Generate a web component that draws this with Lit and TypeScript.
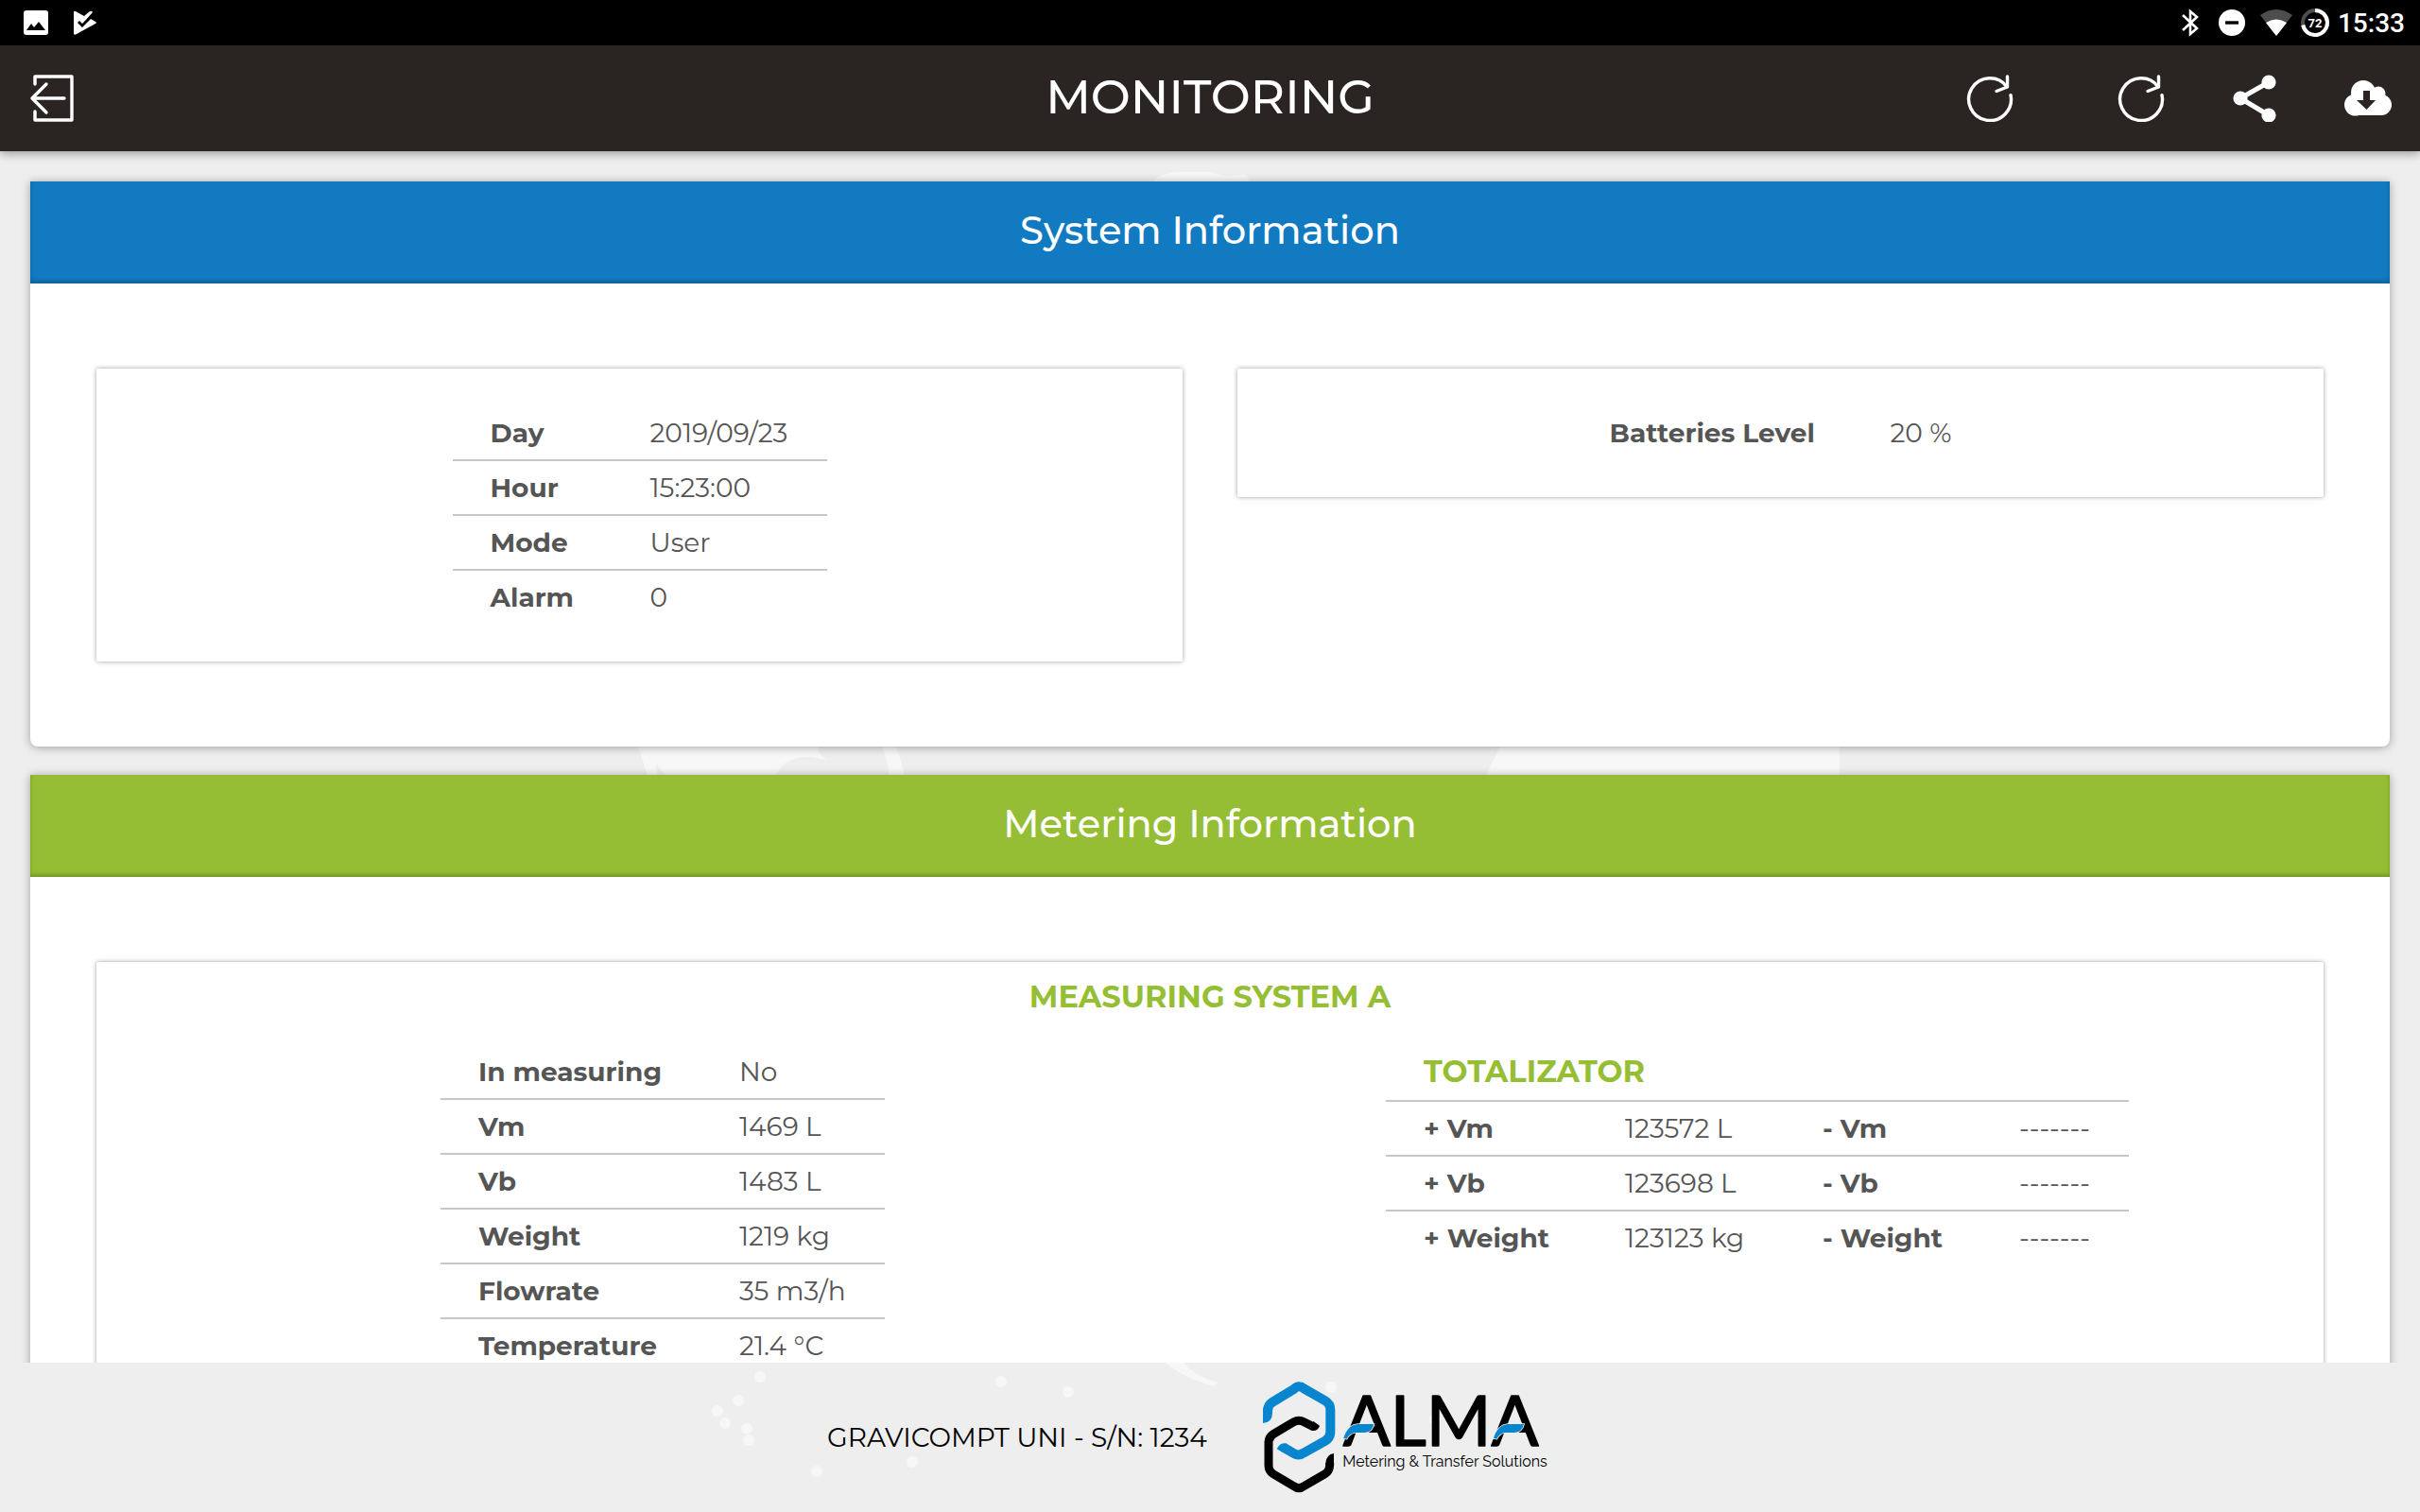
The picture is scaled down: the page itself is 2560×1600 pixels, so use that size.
import { LitElement, html, css, svg } from "lit";
import { customElement, property } from "lit/decorators.js";

type Row = [string, string];

const DAY_ROWS: Row[] = [
  ["Day", "2019/09/23"],
  ["Hour", "15:23:00"],
  ["Mode", "User"],
  ["Alarm", "0"],
];

const BATTERY_ROWS: Row[] = [["Batteries Level", "20 %"]];

const MEASURE_ROWS: Row[] = [
  ["In measuring", "No"],
  ["Vm", "1469 L"],
  ["Vb", "1483 L"],
  ["Weight", "1219 kg"],
  ["Flowrate", "35 m3/h"],
  ["Temperature", "21.4 °C"],
];

const TOTAL_ROWS = [
  ["+ Vm", "123572 L", "- Vm", "-------"],
  ["+ Vb", "123698 L", "- Vb", "-------"],
  ["+ Weight", "123123 kg", "- Weight", "-------"],
];

const DOTS = [
  [804, 1457], [781, 1482], [759, 1493], [767, 1506], [790, 1512], [792, 1524],
  [965, 1547], [864, 1557], [1059, 1462], [1130, 1473], [1408, 1468], [1518, 1502],
];

const tableStyles = css`
  table {
    border-collapse: separate;
    border-spacing: 0;
    table-layout: fixed;
    color: #555;
    font-size: 28px;
    line-height: 56px;
  }
  th,
  td {
    box-sizing: border-box;
    padding: 0 0 0 40px;
    text-align: left;
    white-space: nowrap;
    font-weight: 400;
  }
  th {
    font-weight: 700;
  }
  tr:not(.last) > * {
    border-bottom: 2px solid #c8c8c8;
  }
`;

@customElement("status-bar")
class StatusBar extends LitElement {
  static styles = css`
    :host {
      display: flex;
      align-items: center;
      justify-content: space-between;
      height: 48px;
      padding: 0 16px 0 25px;
      background: #000;
      color: #fff;
      font: 500 28px/50px Roboto, sans-serif;
    }
    .group {
      display: flex;
      align-items: center;
    }
    .left {
      gap: 26px;
    }
    .right {
      gap: 9px;
    }
    .wide {
      margin-right: 12px;
    }
    .medium {
      margin-right: 7px;
    }
    svg {
      display: block;
    }
    time {
      padding-top: 2px;
    }
    .level {
      font: 700 13px Roboto, sans-serif;
    }
  `;
  render() {
    return html`
      <div class="group left">
        <svg width="26" height="26" viewBox="0 0 26 26" aria-hidden="true">
          <rect width="26" height="26" rx="3" fill="#fff" />
          <path d="M3 21L8 14L11 18L16 12L23 21Z" fill="#000" />
        </svg>
        <svg width="26" height="26" viewBox="0 0 26 26" aria-hidden="true">
          <path d="M1 2Q1 0 3 1L12 6L18 1Q20 0 21 2L13 11L10 14L7 11L5 13L10 18L19 9L24 12Q26 13 24 14L4 25Q1 27 1 24Z" fill="#fff" />
        </svg>
      </div>
      <div class="group right">
        <svg class="wide" width="18" height="30" viewBox="0 0 18 30" aria-hidden="true">
          <path d="M1 7L16 21L9 27V3L16 9L1 23" fill="none" stroke="#fff" stroke-width="2.600" />
        </svg>
        <svg class="medium" width="28" height="28" viewBox="0 0 28 28" aria-hidden="true">
          <circle cx="14" cy="14" r="14" fill="#fff" />
          <path d="M7 14H21" stroke="#000" stroke-width="3.400" />
        </svg>
        <svg width="34" height="28" viewBox="0 0 34 28" aria-hidden="true">
          <path d="M0 6Q17 -6 34 6L17 28Z" fill="#4d4d4d" />
          <path d="M6 14Q17 7 28 14L17 28Z" fill="#fff" />
        </svg>
        <svg width="30" height="30" viewBox="0 0 30 30" aria-hidden="true">
          <circle cx="15" cy="15" r="13" fill="none" stroke="#4d4d4d" stroke-width="4" />
          <path d="M15 2A13 13 0 1 1 2.200 17.500" fill="none" stroke="#fff" stroke-width="4" />
          <text class="level" x="15" y="20" text-anchor="middle" fill="#fff">72</text>
        </svg>
        <time>15:33</time>
      </div>
    `;
  }
}

const refreshIcon = svg`
  <path d="M47 21.600A22.400 22.400 0 1 1 43 12.700" />
  <path d="M43.500 2V13L32 17.500" />
`;

@customElement("tool-bar")
class ToolBar extends LitElement {
  static styles = css`
    :host {
      display: grid;
      grid-template-columns: 1fr auto 1fr;
      align-items: center;
      height: 112px;
      padding: 0 30px;
      background: #2a2522;
      color: #fff;
      box-shadow: 0 2px 10px rgba(0, 0, 0, 0.4);
      position: relative;
    }
    h1 {
      margin: 0;
      padding-bottom: 2px;
      font-weight: 500;
      font-size: 50px;
      line-height: 64px;
    }
    button {
      display: block;
      width: 50px;
      height: 50px;
      padding: 0;
      border: 0;
      background: none;
      color: inherit;
      cursor: pointer;
    }
    svg {
      display: block;
      width: 50px;
      height: 50px;
      fill: none;
      stroke: currentColor;
      stroke-width: 3.4;
      stroke-linecap: round;
      stroke-linejoin: round;
    }
    .actions {
      display: flex;
      justify-content: flex-end;
      gap: 70px;
    }
    .apart {
      margin-right: 40px;
    }
    .solid {
      fill: currentColor;
      stroke: none;
    }
    .cut {
      fill: #2a2522;
      stroke: none;
    }
  `;
  render() {
    return html`
      <button type="button" aria-label="Back">
        <svg viewBox="0 0 50 50">
          <path d="M7 10V2H46V48H7V39" />
          <path d="M38 25H4M19 10L4 25L19 40" />
        </svg>
      </button>
      <h1>MONITORING</h1>
      <div class="actions">
        <button type="button" class="apart" aria-label="Refresh">
          <svg viewBox="0 0 50 50">${refreshIcon}</svg>
        </button>
        <button type="button" aria-label="Reload">
          <svg viewBox="0 0 50 50">${refreshIcon}</svg>
        </button>
        <button type="button" aria-label="Share">
          <svg viewBox="0 0 50 50">
            <path d="M40 8L10 25L40 43" stroke-width="5" />
            <g class="solid">
              <circle cx="40" cy="8" r="7.600" /><circle cx="10" cy="25" r="7.600" /><circle cx="40" cy="43" r="7.600" />
            </g>
          </svg>
        </button>
        <button type="button" aria-label="Download">
          <svg viewBox="0 0 50 50">
            <g class="solid">
              <circle cx="20" cy="19" r="13" /><circle cx="36" cy="20" r="7.500" />
              <circle cx="11.500" cy="32" r="11.500" /><circle cx="39" cy="32" r="11" />
              <path d="M11 20H40V43H11Z" />
            </g>
            <path class="cut" d="M20 17H27V27H33L23.500 37L13 27H20Z" />
          </svg>
        </button>
      </div>
    `;
  }
}

@customElement("data-table")
class DataTable extends LitElement {
  @property({ attribute: false }) rows: Row[] = [];
  @property({ type: Number }) first = 0;
  @property({ type: Number }) second = 0;
  static styles = [
    tableStyles,
    css`
      :host {
        display: block;
      }
    `,
  ];
  render() {
    return html`
      <table>
        <colgroup>
          <col style="width:${this.first}px" />
          <col style="width:${this.second}px" />
        </colgroup>
        <tbody>
          ${this.rows.map(
            ([name, value], i) => html`
              <tr class=${i === this.rows.length - 1 ? "last" : ""}>
                <th scope="row">${name}</th>
                <td>${value}</td>
              </tr>
            `
          )}
        </tbody>
      </table>
    `;
  }
}

@customElement("totals-table")
class TotalsTable extends LitElement {
  static styles = [
    tableStyles,
    css`
      :host {
        display: block;
      }
      .title {
        padding-bottom: 2px;
        color: #95be34;
        font-size: 32px;
      }
      .c1 {
        width: 213px;
      }
      .c2 {
        width: 209px;
      }
      .c3 {
        width: 208px;
      }
      .c4 {
        width: 156px;
      }
    `,
  ];
  render() {
    return html`
      <table>
        <colgroup>
          <col class="c1" /><col class="c2" /><col class="c3" /><col class="c4" />
        </colgroup>
        <thead>
          <tr>
            <th class="title" colspan="4">TOTALIZATOR</th>
          </tr>
        </thead>
        <tbody>
          ${TOTAL_ROWS.map(
            (r, i) => html`
              <tr class=${i === TOTAL_ROWS.length - 1 ? "last" : ""}>
                <th scope="row">${r[0]}</th>
                <td>${r[1]}</td>
                <th>${r[2]}</th>
                <td>${r[3]}</td>
              </tr>
            `
          )}
        </tbody>
      </table>
    `;
  }
}

@customElement("alma-logo")
class AlmaLogo extends LitElement {
  static styles = css`
    :host {
      display: block;
    }
    svg {
      display: block;
      width: 304px;
      height: 132px;
    }
    .name {
      font: 400 222px Lato, sans-serif;
      stroke: #000;
      stroke-width: 5px;
      stroke-linejoin: round;
    }
    .tag {
      font: 400 48px Raleway, Lato, sans-serif;
    }
    .bar {
      fill: #0786cf;
      stroke: #eee;
      stroke-width: 5px;
      paint-order: stroke;
    }
  `;
  render() {
    return html`
      <svg viewBox="105 45 912 396" role="img" aria-label="ALMA Metering &amp; Transfer Solutions">
        <g fill="none" stroke="#0786cf" stroke-width="30">
          <path d="M123 166V160Q123 140 140 130L206 90Q222 74 238 88L304 126Q322 136 322 155V226Q322 244 306 254L238 292Q222 304 206 294L172 274" />
        </g>
        <path d="M108 150H138V166Q138 196 108 198Z" fill="#0786cf" />
        <path d="M184 264L170 290L152 280Q164 256 184 264Z" fill="#0786cf" />
        <path d="M262 206L238 194Q222 186 206 194L142 232Q126 242 126 260V332Q126 350 142 360L206 398Q222 410 238 398L304 360Q320 350 320 330V324" fill="none" stroke="#000" stroke-width="27" />
        <path d="M255 218L268 192L288 206Q282 224 264 222Z" />
        <path d="M307 330V324Q309 298 333 294V330Z" />
        <text class="name" x="362" y="269">ALMA</text>
        <path class="bar" d="M364 246Q376 204 410 201H460Q454 227 430 228H398Q382 232 374 248Z" />
        <path class="bar" d="M840 246Q852 204 886 201H936Q930 227 906 228H874Q858 232 850 248Z" />
        <text class="tag" x="361" y="336">Metering &amp; Transfer Solutions</text>
      </svg>
    `;
  }
}

@customElement("app-root")
class AppRoot extends LitElement {
  static styles = css`
    :host {
      display: flex;
      flex-direction: column;
      position: relative;
      height: 100vh;
      overflow: hidden;
      background: #eee;
      color: #000;
      font-family: Montserrat, Inter, "Open Sans", sans-serif;
    }
    .world {
      position: absolute;
      inset: 0;
      width: 100%;
      height: 100%;
      fill: #f7f7f7;
    }
    status-bar,
    tool-bar {
      flex: none;
    }
    tool-bar {
      z-index: 1;
    }
    main {
      position: relative;
      flex: 1;
      min-height: 0;
      overflow: hidden;
      display: flex;
      flex-direction: column;
      gap: 30px;
      padding: 32px 32px 0;
    }
    .card {
      flex: none;
      background: #fff;
      border-radius: 0 0 8px 8px;
      box-shadow: 0 1px 10px rgba(0, 0, 0, 0.34);
    }
    h2 {
      margin: 0;
      height: 108px;
      box-sizing: border-box;
      color: #fff;
      font-weight: 500;
      font-size: 40px;
      line-height: 103px;
      text-align: center;
      box-shadow: inset 0 -3px 4px rgba(0, 0, 0, 0.2);
    }
    .blue {
      background: #127ac1;
    }
    .green {
      background: #95be34;
    }
    .body {
      display: grid;
      grid-template-columns: 1fr 1fr;
      align-items: start;
      gap: 58px;
      padding: 90px 70px;
    }
    .body.single {
      grid-template-columns: 1fr;
    }
    .panel {
      display: flex;
      justify-content: center;
      padding: 40px 0;
      background: #fff;
      border-radius: 2px;
      box-shadow: 0 0 5px rgba(0, 0, 0, 0.38);
    }
    .measure {
      display: block;
      padding: 17px 20px 40px;
    }
    h3 {
      margin: 0 0 31px;
      color: #95be34;
      font-weight: 700;
      font-size: 32px;
      line-height: 40px;
      text-align: center;
    }
    .halves {
      display: grid;
      grid-template-columns: 1fr 1fr;
      justify-items: center;
    }
    footer {
      position: relative;
      flex: none;
      display: flex;
      align-items: center;
      justify-content: center;
      gap: 58px;
      height: 158px;
      padding-right: 46px;
      box-sizing: border-box;
      font-size: 28px;
      line-height: 40px;
    }
  `;
  render() {
    return html`
      <svg class="world" viewBox="0 0 2560 1600" preserveAspectRatio="xMidYMid slice" aria-hidden="true">
        <path d="M1220 192Q1224 184 1246 182H1280L1295 186L1318 185L1322 192Z" />
        <path d="M672 780H864L866 796L874 804L858 801Q826 800 820 824H706L694 808L696 824H686Z" />
        <path d="M929 780H942Q954 800 957 824H941Q939 800 929 780Z" />
        <path d="M1592 780H1946V824H1570Z" />
        <path d="M1225 1436H1246Q1262 1456 1288 1463L1284 1467Q1250 1458 1225 1436Z" />
        ${DOTS.map(([x, y]) => svg`<circle cx=${x} cy=${y} r="6" />`)}
      </svg>
      <status-bar></status-bar>
      <tool-bar></tool-bar>
      <main>
        <section class="card">
          <h2 class="blue">System Information</h2>
          <div class="body">
            <div class="panel"><data-table .rows=${DAY_ROWS} first="169" second="227"></data-table></div>
            <div class="panel"><data-table .rows=${BATTERY_ROWS} first="297" second="145"></data-table></div>
          </div>
        </section>
        <section class="card">
          <h2 class="green">Metering Information</h2>
          <div class="body single">
            <div class="panel measure">
              <h3>MEASURING SYSTEM A</h3>
              <div class="halves">
                <data-table .rows=${MEASURE_ROWS} first="276" second="194"></data-table>
                <totals-table></totals-table>
              </div>
            </div>
          </div>
        </section>
      </main>
      <footer>
        <span>GRAVICOMPT UNI - S/N: 1234</span>
        <alma-logo></alma-logo>
      </footer>
    `;
  }
}
